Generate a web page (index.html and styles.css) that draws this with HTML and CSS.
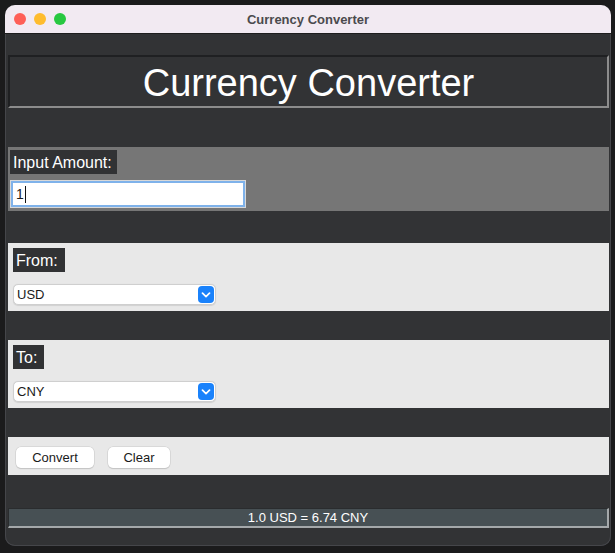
FILE: index.html
```html
<!DOCTYPE html>
<html>
<head>
<meta charset="utf-8">
<link rel="stylesheet" href="styles.css">
</head>
<body>
<div class="window">
  <div class="titlebar">
    <div class="lights">
      <span class="light red"></span>
      <span class="light yellow"></span>
      <span class="light green"></span>
    </div>
    <div class="wtitle">Currency Converter</div>
  </div>
  <div class="content">
    <div class="heading">Currency Converter</div>
    <div class="frame frame-input">
      <div class="label">Input Amount:</div>
      <div class="entry"><span class="entry-text">1</span><span class="caret"></span></div>
    </div>
    <div class="frame frame-light">
      <div class="label">From:</div>
      <div class="select"><span class="sel-text">USD</span>
        <span class="sel-btn"><svg width="10" height="6" viewBox="0 0 10 6"><path d="M1.5 1.2 L5 4.6 L8.5 1.2" fill="none" stroke="#fff" stroke-width="1.7" stroke-linecap="round" stroke-linejoin="round"/></svg></span>
      </div>
    </div>
    <div class="frame frame-light">
      <div class="label">To:</div>
      <div class="select"><span class="sel-text">CNY</span>
        <span class="sel-btn"><svg width="10" height="6" viewBox="0 0 10 6"><path d="M1.5 1.2 L5 4.6 L8.5 1.2" fill="none" stroke="#fff" stroke-width="1.7" stroke-linecap="round" stroke-linejoin="round"/></svg></span>
      </div>
    </div>
    <div class="frame frame-buttons">
      <div class="btn btn-convert">Convert</div>
      <div class="btn btn-clear">Clear</div>
    </div>
    <div class="result">1.0 USD = 6.74 CNY</div>
  </div>
</div>
</body>
</html>
```
FILE: styles.css
```css
html, body {
  margin: 0;
  padding: 0;
  background: #1b1b1c;
  width: 615px;
  height: 553px;
  overflow: hidden;
  font-family: "Liberation Sans", Arial, sans-serif;
}
.window {
  margin: 5px 0 0 5px;
  width: 606px;
  height: 541px;
  border-radius: 10px;
  background: #323335;
  overflow: hidden;
  display: flex;
  flex-direction: column;
  box-shadow: inset 1px 0 0 #45464a, inset -1px 0 0 #45464a, inset 0 -1px 0 #45464a;
}
.titlebar {
  height: 28px;
  background: #f2eaf2;
  border-bottom: 1px solid #1e1e1e;
  position: relative;
  display: flex;
  align-items: center;
  justify-content: center;
  flex: none;
}
.lights {
  position: absolute;
  left: 9px;
  top: 8px;
  display: flex;
  gap: 8px;
}
.light {
  width: 12px;
  height: 12px;
  border-radius: 50%;
}
.red { background: #fe5f57; }
.yellow { background: #febc2e; }
.green { background: #28c840; }
.wtitle {
  font-size: 13px;
  font-weight: bold;
  color: #4b4a4d;
}
.content {
  display: flex;
  flex-direction: column;
  padding: 21px 2px 0 3px;
}
.heading {
  height: 46px;
  padding-top: 3px;
  border-style: solid;
  border-width: 2px;
  border-color: #1f2022 #8c8c8c #8c8c8c #1f2022;
  color: #ffffff;
  font-size: 38px;
  line-height: 46px;
  text-align: center;
}
.frame {
  display: flex;
  flex-direction: column;
  align-items: flex-start;
}
.frame-input {
  margin-top: 39px;
  height: 64px;
  box-sizing: border-box;
  background: #767676;
  padding: 3px 2px;
}
.label {
  background: #313234;
  color: #ffffff;
  font-size: 16px;
  height: 24px;
  line-height: 26px;
  padding: 0 5px 0 3px;
}
.entry {
  margin-top: 6px;
  width: 236px;
  height: 28px;
  box-sizing: border-box;
  background: #fff;
  border: 1px solid #d8d8d8;
  box-shadow: inset 0 0 0 2px #7fb2ea;
  display: flex;
  align-items: center;
  padding-left: 5px;
}
.entry-text {
  font-size: 14px;
  color: #1a1a1a;
}
.caret {
  width: 1px;
  height: 17px;
  background: #111;
  margin-left: 1px;
}
.frame-light {
  margin-top: 32px;
  height: 68px;
  box-sizing: border-box;
  background: #e8e8e8;
  padding: 5px 5px;
}
.frame-light + .frame-light {
  margin-top: 29px;
}
.frame-light .label {
  padding: 0 7px 0 3px;
}
.select {
  margin-top: 12px;
  width: 203px;
  height: 21px;
  box-sizing: border-box;
  background: #fff;
  border: 1px solid #cfcfcf;
  border-radius: 5px;
  display: flex;
  align-items: center;
  justify-content: space-between;
  padding: 0 1px 0 3px;
  box-shadow: 0 0.5px 1px rgba(0,0,0,0.1);
}
.sel-text {
  font-size: 13px;
  color: #1a1a1a;
}
.sel-btn {
  width: 16px;
  height: 17px;
  background: #1a82fb;
  border-radius: 4px;
  display: flex;
  align-items: center;
  justify-content: center;
}
.frame-buttons {
  margin-top: 29px;
  height: 38px;
  box-sizing: border-box;
  background: #e8e8e8;
  flex-direction: row;
  align-items: flex-start;
  padding: 10px 8px 0 8px;
  gap: 14px;
}
.btn {
  height: 21px;
  box-sizing: border-box;
  background: #fff;
  border-radius: 5px;
  box-shadow: 0 0 0 0.5px #c9c9c9, 0 1px 1px rgba(0,0,0,0.18);
  font-size: 13px;
  color: #1a1a1a;
  display: flex;
  align-items: center;
  justify-content: center;
}
.btn-convert { width: 78px; }
.btn-clear { width: 62px; }
.result {
  margin-top: 33px;
  height: 20px;
  box-sizing: border-box;
  background: #475054;
  border-style: solid;
  border-width: 1px 2px 2px 1px;
  border-color: #2a2c2e #a4a8aa #a4a8aa #2a2c2e;
  color: #fff;
  font-size: 13px;
  display: flex;
  align-items: center;
  justify-content: center;
}
```
